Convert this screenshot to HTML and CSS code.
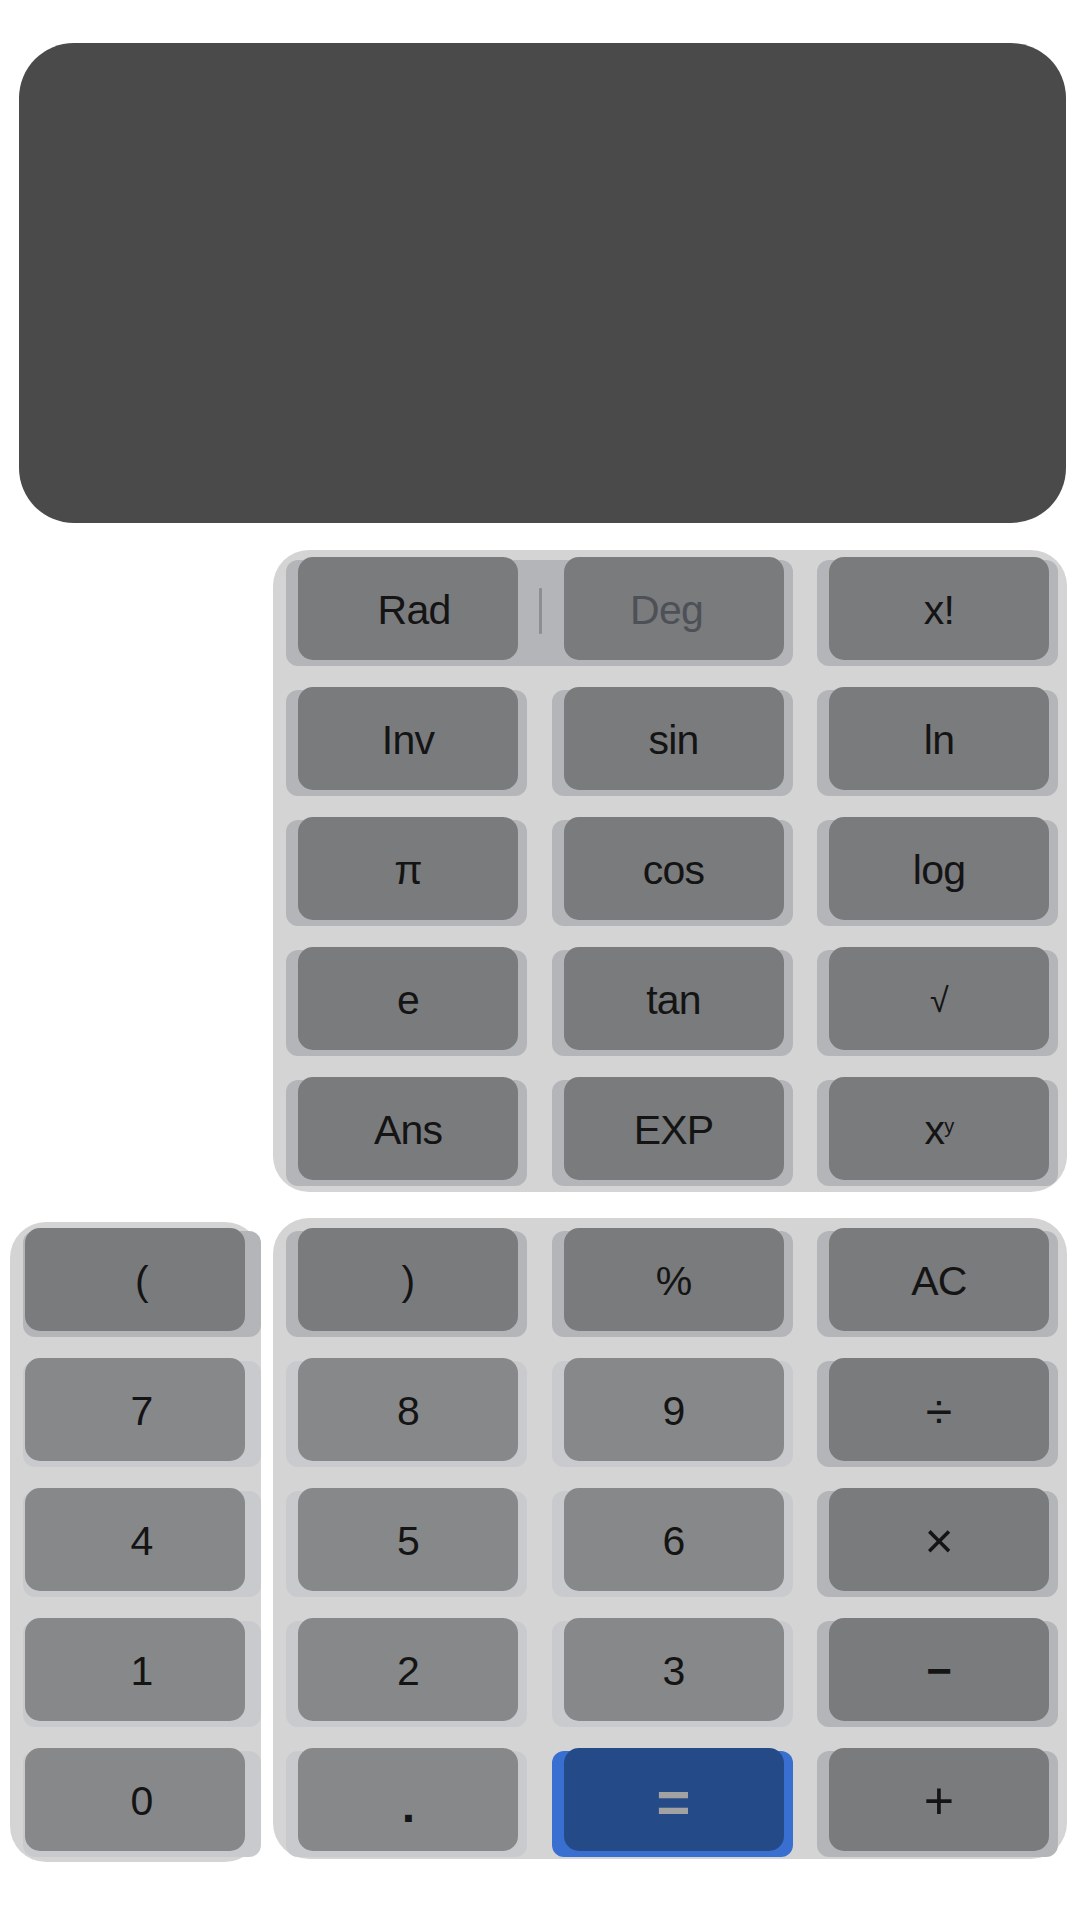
FILE: index.html
```html
<!DOCTYPE html>
<html lang="en">
<head>
<meta charset="utf-8">
<title>Calculator</title>
<link rel="stylesheet" href="styles.css">
</head>
<body>
<div class="calc">
  <div class="display"></div>

  <div class="sci-wrap">
    <div class="panel sci">
      <div class="cell span2 toggle">
        <button class="key rad">Rad</button>
        <span class="sep"></span>
        <button class="key deg">Deg</button>
      </div>
      <div class="cell"><button class="key">x!</button></div>

      <div class="cell"><button class="key">Inv</button></div>
      <div class="cell"><button class="key">sin</button></div>
      <div class="cell"><button class="key">ln</button></div>

      <div class="cell"><button class="key">π</button></div>
      <div class="cell"><button class="key">cos</button></div>
      <div class="cell"><button class="key">log</button></div>

      <div class="cell"><button class="key">e</button></div>
      <div class="cell"><button class="key">tan</button></div>
      <div class="cell"><button class="key sm">√</button></div>

      <div class="cell"><button class="key">Ans</button></div>
      <div class="cell"><button class="key">EXP</button></div>
      <div class="cell"><button class="key">x<sup>y</sup></button></div>
    </div>
  </div>

  <div class="pad">
    <div class="panel left">
      <div class="cell"><button class="key">(</button></div>
      <div class="cell num"><button class="key">7</button></div>
      <div class="cell num"><button class="key">4</button></div>
      <div class="cell num"><button class="key">1</button></div>
      <div class="cell num"><button class="key">0</button></div>
    </div>

    <div class="panel main">
      <div class="cell"><button class="key">)</button></div>
      <div class="cell"><button class="key">%</button></div>
      <div class="cell"><button class="key">AC</button></div>

      <div class="cell num"><button class="key">8</button></div>
      <div class="cell num"><button class="key">9</button></div>
      <div class="cell"><button class="key op">÷</button></div>

      <div class="cell num"><button class="key">5</button></div>
      <div class="cell num"><button class="key">6</button></div>
      <div class="cell"><button class="key op times">×</button></div>

      <div class="cell num"><button class="key">2</button></div>
      <div class="cell num"><button class="key">3</button></div>
      <div class="cell"><button class="key op minus">−</button></div>

      <div class="cell num"><button class="key dot">.</button></div>
      <div class="cell eq"><button class="key">=</button></div>
      <div class="cell"><button class="key op plus">+</button></div>
    </div>
  </div>
</div>
</body>
</html>
```

FILE: styles.css
```css
* {
  box-sizing: border-box;
}

body {
  margin: 0;
  background: #ffffff;
  font-family: "Liberation Sans", Arial, sans-serif;
}

.calc {
  width: 1080px;
  padding-top: 43px;
}

.display {
  margin: 0 14px 0 19px;
  height: 480px;
  background: #4a4a4a;
  border-radius: 55px;
}

.sci-wrap {
  display: flex;
  justify-content: flex-end;
  padding-right: 13px;
  margin-top: 27px;
}

.panel {
  background: #d4d4d4;
  border-radius: 36px;
  display: grid;
  row-gap: 24px;
}

.sci {
  width: 794px;
  grid-template-columns: repeat(3, 241px);
  column-gap: 24.5px;
  padding: 10px 9px 6px 13px;
}

.cell {
  height: 106px;
  padding: 0 9px 6px 12px;
  border-radius: 12px;
  background: #b4b5b8;
  display: flex;
  align-items: flex-start;
}

.cell.num {
  background: #c9cacd;
}

.cell.eq {
  background: #3a6fd2;
}

.key {
  margin-top: -3px;
  height: 103px;
  width: 220px;
  flex: none;
  border: 0;
  padding: 3px 0 0;
  border-radius: 15px;
  background: #7a7b7d;
  font-family: "Liberation Sans", Arial, sans-serif;
  font-size: 41px;
  letter-spacing: -0.8px;
  color: #141414;
  display: flex;
  align-items: center;
  justify-content: center;
}

.num .key {
  background: #878889;
}

.eq .key {
  background: #254a88;
  color: #a2a2a2;
  font-weight: bold;
  font-size: 58px;
  letter-spacing: 0;
}

.key.rad {
  padding-left: 12px;
}

.key.deg {
  padding-right: 14px;
  color: #4e5057;
}

.key.op {
  font-size: 48px;
  letter-spacing: 0;
}

.key.op.times {
  font-size: 50px;
}

.key.op.minus {
  font-weight: bold;
  font-size: 44px;
}

.key.op.plus {
  font-size: 52px;
}

.key.dot {
  font-weight: bold;
  font-size: 48px;
  padding-top: 12px;
}

.key.sm {
  font-size: 34px;
}

.key sup {
  font-size: 20px;
  line-height: 0;
  position: relative;
  top: -4px;
}

.span2 {
  grid-column: span 2;
}

.toggle .sep {
  flex: 1;
  display: flex;
  justify-content: center;
  margin-top: 28px;
  height: 46px;
}

.toggle .sep::before {
  content: "";
  width: 3px;
  height: 46px;
  background: #8d8e91;
  border-radius: 1px;
}

.pad {
  display: flex;
  align-items: flex-start;
  gap: 12px;
  padding-left: 10px;
  margin-top: 26px;
}

.left {
  width: 251px;
  margin-top: 4px;
  grid-template-columns: 238px;
  padding: 9px 0 5px 13px;
}

.left .cell {
  padding: 0 16px 6px 2px;
}

.left .key {
  padding-left: 13px;
}

.main {
  width: 794px;
  grid-template-columns: repeat(3, 241px);
  column-gap: 24.5px;
  padding: 13px 9px 2px 13px;
}
```
